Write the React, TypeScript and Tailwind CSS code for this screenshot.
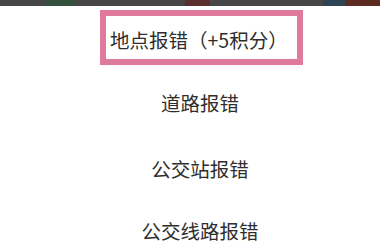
export default function App() {
  const font = { fontFamily: '"Noto Sans CJK SC", "Noto Sans", sans-serif' };
  return (
    <div className="w-[380px] h-[245px] bg-white overflow-hidden text-[#2e2e2e]" style={font}>
      {/* photo strip at top, cut off */}
      <div className="flex h-[6px] bg-[#464646]">
        <div className="w-[45px]" />
        <div className="w-[30px] bg-[#34503c]" />
        <div className="w-[110px]" />
        <div className="w-[25px] bg-[#5a2e2c]" />
        <div className="w-[113px]" />
        <div className="w-[22px] bg-[#2f4452]" />
        <div className="flex-1 bg-[#5b2b22]" />
      </div>

      <div className="pt-[4px] pl-[100px]">
        <div className="w-[203px] h-[55px] border-[6px] border-[#e07a9c] flex items-center pl-[4px] pt-[4px]">
          <span className="text-[19.5px] leading-none whitespace-nowrap">地点报错（+5积分）</span>
        </div>
      </div>

      <div className="flex flex-col items-center pl-[20px] text-[19.5px] leading-[24px]">
        <div className="mt-[26px]">道路报错</div>
        <div className="mt-[42px]">公交站报错</div>
        <div className="mt-[38px]">公交线路报错</div>
      </div>
    </div>
  );
}
